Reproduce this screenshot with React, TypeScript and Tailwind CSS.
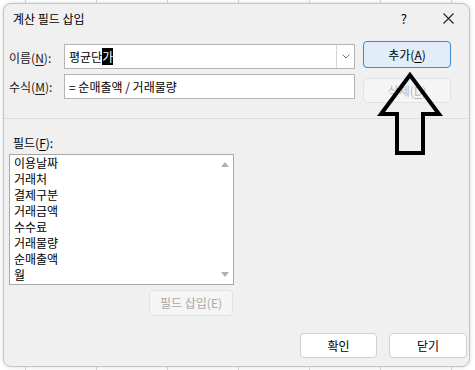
import React from 'react'

const fields = ['이용날짜', '거래처', '결제구분', '거래금액', '수수료', '거래물량', '순매출액', '월']

function Mnemonic({ text, letter }: { text: string; letter: string }) {
  return (
    <span>
      {text}(<span className="underline underline-offset-2">{letter}</span>)
    </span>
  )
}

export default function App() {
  return (
    <div className="relative h-[370px] w-[475px] overflow-hidden bg-white bg-[linear-gradient(90deg,#d6d6d6_1px,transparent_1px)] bg-[length:71px_100%] bg-[position:25px_0] pl-[3px] pt-[3px] font-['Noto_Sans_CJK_KR',sans-serif] text-[12px] leading-[16px] text-black">
      <div className="flex h-[364px] w-[467px] flex-col rounded-[8px] border border-[#c4c4c4] bg-[#f0f0f0] shadow-[0_0_4px_rgba(0,0,0,0.15)]">
        {/* title bar */}
        <div className="flex h-[28px] items-center pl-[9px]">
          <span className="flex-1 pt-[2px]">계산 필드 삽입</span>
          <span className="mr-[36px] pt-[2px] text-[13px]">?</span>
          <svg width="11" height="11" viewBox="0 0 11 11" className="mr-[15px]">
            <path d="M0.5 0.5 L10.5 10.5 M10.5 0.5 L0.5 10.5" stroke="#222" strokeWidth="1.1" />
          </svg>
        </div>

        {/* name / formula + buttons */}
        <div className="mt-[9px] flex pl-[5px]">
          <div className="flex flex-col gap-[5px] pt-[3px]">
            <div className="flex h-[25px] items-center">
              <span className="w-[55px] pt-[3px] text-[#1a1a1a]">
                <Mnemonic text="이름" letter="N" />:
              </span>
              <div className="flex h-[25px] w-[291px] items-center border border-[#b4b4b4] bg-white">
                <span className="flex-1 pl-[4px]">
                  평균단<span className="bg-black text-white">가</span>
                </span>
                <div className="flex h-full w-[18px] items-center justify-center border-l border-[#d4d4d4]">
                  <svg width="8" height="5" viewBox="0 0 8 5">
                    <path d="M0.5 0.5 L4 4 L7.5 0.5" fill="none" stroke="#777" strokeWidth="1" />
                  </svg>
                </div>
              </div>
            </div>
            <div className="flex h-[25px] items-center">
              <span className="w-[55px] pt-[1px] text-[#1a1a1a]">
                <Mnemonic text="수식" letter="M" />:
              </span>
              <div className="flex h-[25px] w-[291px] items-center border border-[#b4b4b4] bg-white pl-[4px]">
                = 순매출액 / 거래물량
              </div>
            </div>
          </div>
          <div className="ml-[8px] flex w-[88px] flex-col">
            <button className="flex h-[27px] items-center justify-center rounded-[4px] border border-[#3f86cc] bg-[#e1edf8]">
              <Mnemonic text="추가" letter="A" />
            </button>
            <button className="mt-[10px] flex h-[25px] items-center justify-center rounded-[4px] border border-[#e2e2e2] bg-[#f5f5f5] text-[#b8b8b8]">
              <Mnemonic text="삭제" letter="D" />
            </button>
          </div>
        </div>

        <div className="mt-[15px] h-px bg-[#dddddd]" />

        {/* fields */}
        <div className="mt-[16px] pl-[9px]">
          <Mnemonic text="필드" letter="F" />:
        </div>
        <div className="ml-[5px] mt-[3px] flex w-[225px] flex-col items-end">
          <div className="flex h-[131px] w-full border border-[#a8a8a8] bg-white">
            <div className="flex flex-1 flex-col pl-[4px]">
              {fields.map((f) => (
                <div key={f} className="h-[16px]">
                  {f}
                </div>
              ))}
            </div>
            <div className="flex w-[17px] flex-col items-center justify-between py-[7px]">
              <svg width="8" height="5" viewBox="0 0 8 5">
                <path d="M0 5 L4 0 L8 5 Z" fill="#b0b0b0" />
              </svg>
              <svg width="8" height="5" viewBox="0 0 8 5">
                <path d="M0 0 L4 5 L8 0 Z" fill="#b0b0b0" />
              </svg>
            </div>
          </div>
          <button className="mr-px mt-[5px] flex h-[26px] w-[84px] items-center justify-center rounded-[4px] border border-[#e2e2e2] bg-[#f5f5f5] text-[#a8a8a8]">
            필드 삽입(E)
          </button>
        </div>

        {/* footer */}
        <div className="mt-[17px] flex justify-end gap-[12px] pr-[2px]">
          <button className="flex h-[25px] w-[77px] items-center justify-center rounded-[4px] border border-[#d0d0d0] bg-white">
            확인
          </button>
          <button className="flex h-[25px] w-[78px] items-center justify-center rounded-[4px] border border-[#d0d0d0] bg-white">
            닫기
          </button>
        </div>
      </div>

      {/* hand-drawn annotation arrow */}
      <svg className="pointer-events-none absolute left-0 top-0" width="475" height="370" viewBox="0 0 475 370">
        <path
          d="M410 75 L381 114 L397 114 L397 153 L423 153 L423 114 L439 114 Z"
          fill="none"
          stroke="#000"
          strokeWidth="4"
          strokeLinejoin="miter"
        />
      </svg>
    </div>
  )
}
